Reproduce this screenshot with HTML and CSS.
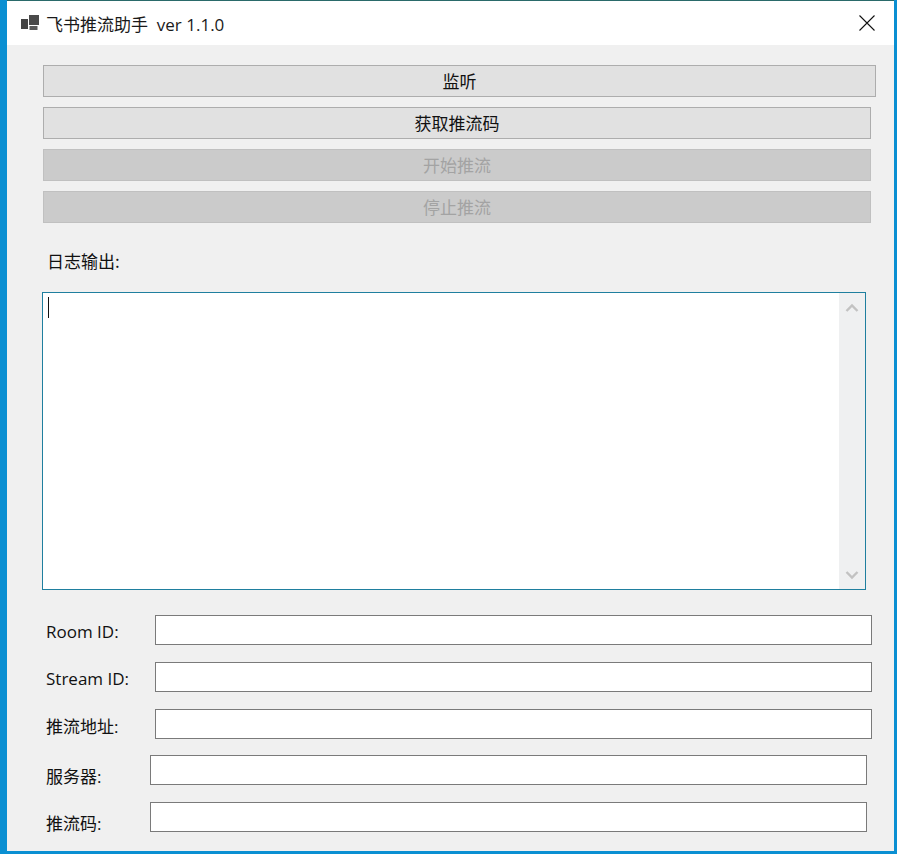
FILE: index.html
```html
<!DOCTYPE html>
<html lang="zh-CN">
<head>
<meta charset="utf-8">
<title>飞书推流助手</title>
<link rel="stylesheet" href="styles.css">
</head>
<body>
<div class="window">
  <header class="titlebar">
    <svg class="app-icon" width="20" height="18" viewBox="0 0 20 18" aria-hidden="true">
      <rect x="1" y="5" width="7" height="10" fill="#444"/>
      <rect x="9" y="1" width="10" height="10" fill="#4a4a4a"/>
      <rect x="9.5" y="12" width="8" height="4" fill="#5a5a5a"/>
    </svg>
    <span class="title">飞书推流助手&nbsp; ver 1.1.0</span>
    <svg class="close" width="16" height="16" viewBox="0 0 16 16" aria-hidden="true">
      <path d="M0.5 0.5L15.5 15.5M15.5 0.5L0.5 15.5" stroke="#111" stroke-width="1.1" fill="none"/>
    </svg>
  </header>
  <main class="content">
    <div class="buttons">
      <button class="btn btn-wide">监听</button>
      <button class="btn">获取推流码</button>
      <button class="btn btn-off">开始推流</button>
      <button class="btn btn-off">停止推流</button>
    </div>
    <div class="log-label">日志输出:</div>
    <div class="log">
      <div class="log-text"><span class="caret"></span></div>
      <div class="scrollbar">
        <svg width="14" height="10" viewBox="0 0 14 10" aria-hidden="true"><path d="M1.5 8L7 2.5L12.5 8" stroke="#c2c2c2" stroke-width="2.4" fill="none"/></svg>
        <svg width="14" height="10" viewBox="0 0 14 10" aria-hidden="true"><path d="M1.5 2L7 7.5L12.5 2" stroke="#c2c2c2" stroke-width="2.4" fill="none"/></svg>
      </div>
    </div>
    <div class="form">
      <div class="row"><label class="lbl">Room ID:</label><div class="field"></div></div>
      <div class="row"><label class="lbl">Stream ID:</label><div class="field"></div></div>
      <div class="row"><label class="lbl">推流地址:</label><div class="field"></div></div>
      <div class="row row-short"><label class="lbl">服务器:</label><div class="field"></div></div>
      <div class="row row-short"><label class="lbl">推流码:</label><div class="field"></div></div>
    </div>
  </main>
</div>
</body>
</html>
```
FILE: styles.css
```css
* { box-sizing: border-box; }
html, body { margin: 0; height: 100%; }
body {
  width: 897px;
  height: 854px;
  overflow: hidden;
  background: #0a8fd2;
  font-family: "Noto Sans CJK SC", "Noto Sans", sans-serif;
  color: #111;
}
.window {
  height: 851px;
  margin: 0 3px 0 7px;
  border-top: 1px solid #2a6a6a;
  display: flex;
  flex-direction: column;
  background: #f0f0f0;
}
.titlebar {
  height: 44px;
  flex: none;
  background: #fff;
  display: flex;
  align-items: center;
  padding: 0 19px 0 13px;
}
.app-icon { flex: none; margin-right: 6px; }
.title { font-size: 17px; flex: 1; color: #1a1a1a; font-family: "Open Sans", "Noto Sans CJK SC", sans-serif; white-space: nowrap; }
.close { flex: none; }
.content { flex: 1; padding: 20px 0 0 35px; }
.buttons { display: flex; flex-direction: column; gap: 10px; }
.btn {
  width: 828px;
  height: 32px;
  margin-left: 1px;
  padding: 0 0 2px;
  border: 1px solid #adadad;
  background: #e1e1e1;
  color: #111;
  font: 17px/1 "Noto Sans CJK SC", sans-serif;
}
.btn-wide { width: 833px; }
.btn-off { background: #cbcbcb; border-color: #c0c0c0; color: #a3a3a3; }
.log-label { margin: 26px 0 0 4px; height: 24px; line-height: 24px; font-size: 17px; padding-left: 1px; }
.log {
  margin-top: 19px;
  width: 824px;
  height: 298px;
  border: 1px solid #1f7f9f;
  background: #fff;
  display: flex;
}
.log-text { flex: 1; padding: 4px 0 0 5px; }
.caret { display: block; width: 1px; height: 21px; background: #111; }
.scrollbar {
  width: 26px;
  background: #eff0f1;
  display: flex;
  flex-direction: column;
  justify-content: space-between;
  align-items: center;
  padding: 10px 0 9px;
}
.form { margin-top: 25px; display: flex; flex-direction: column; gap: 17px; }
.row { display: flex; align-items: center; height: 30px; padding-left: 4px; }
.row:nth-child(4) { margin-top: -1px; }
.lbl { width: 109px; flex: none; font-size: 17px; font-family: "Open Sans", "Noto Sans CJK SC", sans-serif; padding-top: 2px; }
.row-short .lbl { width: 104px; padding-top: 10px; }
.field { width: 717px; height: 30px; background: #fff; border: 1px solid #7a7a7a; }
```
